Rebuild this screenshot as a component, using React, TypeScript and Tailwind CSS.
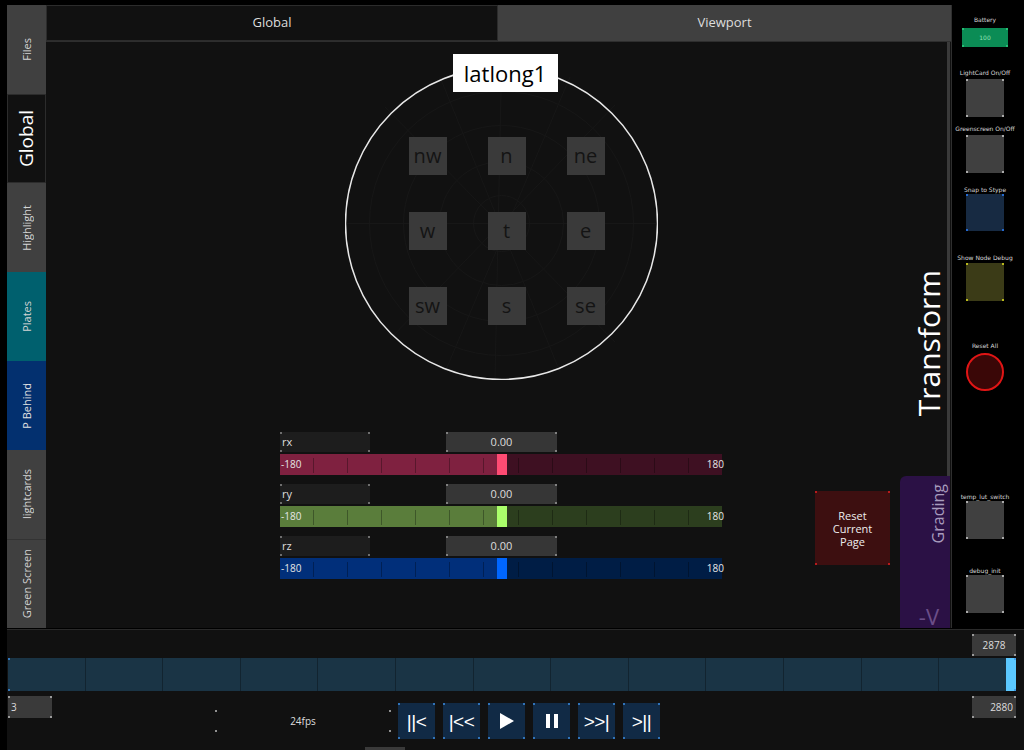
import React from 'react';

type DotsProps = { color?: string };

const Dots: React.FC<DotsProps> = ({ color = 'bg-[#d0d0d0]' }) => (
    <>
        <span className={`absolute left-0 top-0 w-[2px] h-[2px] rounded-full ${color}`} />
        <span className={`absolute right-0 top-0 w-[2px] h-[2px] rounded-full ${color}`} />
        <span className={`absolute left-0 bottom-0 w-[2px] h-[2px] rounded-full ${color}`} />
        <span className={`absolute right-0 bottom-0 w-[2px] h-[2px] rounded-full ${color}`} />
    </>
);

const vertical = '[writing-mode:vertical-rl] rotate-180';

const sideTabs = [
    { label: 'Files', cls: 'bg-[#404040] text-[11px] text-[#d4d4d4]' },
    { label: 'Global', cls: 'bg-[#111111] border border-[#2c2c2c] text-[19px] text-white' },
    { label: 'Highlight', cls: 'bg-[#404040] text-[11px] text-[#d4d4d4]' },
    { label: 'Plates', cls: 'bg-[#00606e] text-[11px] text-[#d4d4d4]' },
    { label: 'P Behind', cls: 'bg-[#03306f] text-[11px] text-[#e0e0e0]' },
    { label: 'lightcards', cls: 'bg-[#404040] text-[11px] text-[#d4d4d4]' },
    { label: 'Green Screen', cls: 'bg-[#404040] border-t border-[#333] text-[11px] text-[#d4d4d4]' },
];

const Sidebar: React.FC = () => (
    <div className="w-[39px] h-[623px] mt-[5px] flex flex-col">
        {sideTabs.map((t) => (
            <div key={t.label} className={`h-[89px] flex items-center justify-center ${t.cls}`}>
                <span className={`${vertical} whitespace-nowrap leading-none`}>{t.label}</span>
            </div>
        ))}
    </div>
);

const cells = ['nw', 'n', 'ne', 'w', 't', 'e', 'sw', 's', 'se'];

const Globe: React.FC = () => (
    <div className="relative w-[313px] h-[313px] mt-[25px]">
        <svg className="absolute inset-0" width="313" height="313" viewBox="0 0 313 313">
            <g fill="none" stroke="#171717" strokeWidth="1">
                <circle cx="156.5" cy="156.5" r="28" />
                <circle cx="156.5" cy="156.5" r="62" />
                <circle cx="156.5" cy="156.5" r="98" />
                <circle cx="156.5" cy="156.5" r="132" />
                <line x1="0" y1="156.5" x2="313" y2="156.5" />
                <line x1="156.5" y1="0" x2="150" y2="313" />
                <line x1="40" y1="40" x2="270" y2="275" />
                <line x1="270" y1="38" x2="45" y2="272" />
                <line x1="95" y1="10" x2="215" y2="305" />
                <line x1="225" y1="10" x2="100" y2="305" />
            </g>
            <circle cx="156.5" cy="156.5" r="156" fill="none" stroke="#e8e8e8" strokeWidth="1.5" />
        </svg>
        <div className="absolute left-[108px] -top-[13px] w-[105px] h-[38px] bg-white flex items-center justify-center text-[22px] text-black">
            latlong1
        </div>
        <div className="relative grid grid-cols-[38px_38px_38px] gap-x-[41px] gap-y-[37px] pl-[64px] pt-[70px]">
            {cells.map((c) => (
                <div key={c} className="w-[38px] h-[38px] bg-[#3a3a3a] flex items-center justify-center text-[20px] text-[#141414] leading-none">
                    {c}
                </div>
            ))}
        </div>
    </div>
);

type SliderProps = { name: string; fill: string; handle: string; rest: string };

const Ticks: React.FC<{ count: number; cls: string }> = ({ count, cls }) => (
    <div className={`absolute inset-x-0 flex ${cls}`}>
        {Array.from({ length: count }).map((_, i) => (
            <div key={i} className={`flex-1 ${i < count - 1 ? 'border-r border-black/30' : ''}`} />
        ))}
    </div>
);

const SliderRow: React.FC<SliderProps> = ({ name, fill, handle, rest }) => (
    <div className="flex flex-col gap-[2px]">
        <div className="flex h-[20px]">
            <div className="relative w-[90px] bg-[#1d1d1d] pl-[2px] text-[11px] leading-[20px] text-[#dddddd]">
                {name}
                <Dots color="bg-[#8a8a8a]" />
            </div>
            <div className="relative ml-[76px] w-[111px] bg-[#363636] text-center text-[11px] leading-[20px] text-[#dddddd]">
                0.00
                <Dots color="bg-[#9a9a9a]" />
            </div>
        </div>
        <div className="relative h-[21px] flex">
            <div className={`w-[217px] ${fill}`} />
            <div className={`w-[10px] ${handle}`} />
            <div className={`flex-1 ${rest}`} />
            <Ticks count={13} cls="top-[4px] bottom-[2px]" />
            <span className="absolute left-[1px] top-0 text-[10px] leading-[21px] text-[#e6e6e6]">-180</span>
            <span className="absolute -right-[2px] top-0 text-[10px] leading-[21px] text-[#e6e6e6]">180</span>
        </div>
    </div>
);

const Canvas: React.FC = () => (
    <div className="relative h-[586px] bg-[#111111] flex">
        <div className="ml-[234px] w-[442px] flex flex-col items-center">
            <Globe />
            <div className="w-full mt-[52px] flex flex-col gap-[9px]">
                <SliderRow name="rx" fill="bg-[#7f2140]" handle="bg-[#ff4b73]" rest="bg-[#3e1022]" />
                <SliderRow name="ry" fill="bg-[#5a7d3b]" handle="bg-[#aaff6a]" rest="bg-[#2c3e1e]" />
                <SliderRow name="rz" fill="bg-[#012f7a]" handle="bg-[#0066ff]" rest="bg-[#001d45]" />
            </div>
        </div>
        <div className="ml-[93px] w-[75px]">
            <div className="relative mt-[449px] h-[74px] bg-[#3d0f10] flex items-center justify-center text-center text-[11px] leading-[13px] text-[#eeeeee]">
                Reset
                <br />
                Current
                <br />
                Page
                <Dots color="bg-[#e02020]" />
            </div>
        </div>
        <div className="ml-[10px] w-[50px] flex flex-col">
            <div className="mt-[228px] pl-[12px]">
                <span className={`${vertical} block text-[30px] leading-[34px] text-white whitespace-nowrap`}>Transform</span>
            </div>
            <div className="mt-auto h-[152px] bg-[#2b1145] rounded-tl-[6px] flex flex-col items-end pr-[3px]">
                <span className={`${vertical} mt-[8px] text-[16px] leading-[18px] text-[#a89cbd]`}>Grading</span>
                <span className="mt-auto mr-[8px] mb-[1px] text-[22px] leading-[22px] text-[#6b4e88]">-V</span>
            </div>
        </div>
        <div className="absolute right-[1px] top-0 h-[434px] w-[3px] bg-[#3a3a3a]" />
    </div>
);

const Main: React.FC = () => (
    <div className="w-[906px] h-[623px] mt-[5px] flex flex-col border-r border-[#2f2f2f]">
        <div className="h-[36px] flex text-[13px] text-[#dddddd]">
            <div className="w-[452px] bg-[#111111] border border-[#2c2c2c] flex items-center justify-center">Global</div>
            <div className="flex-1 bg-[#404040] flex items-center justify-center">Viewport</div>
        </div>
        <div className="h-px bg-[#2e2e2e]" />
        <Canvas />
    </div>
);

const tiny = "text-[6px] leading-[8px] text-[#d8d8d8] text-center whitespace-nowrap font-['DejaVu_Sans',sans-serif]";

const RightCol: React.FC = () => (
    <div className="flex-1 pr-[6px] flex flex-col items-center">
        <div className={`mt-[16px] ${tiny}`}>Battery</div>
        <div className="relative mt-[4px] w-[46px] h-[19px] bg-[#0b8c55] flex items-center justify-center text-[6px] text-[#8fe0b4] font-['DejaVu_Sans',sans-serif]">
            100
            <Dots color="bg-[#2fd080]" />
        </div>
        <div className={`mt-[22px] ${tiny}`}>LightCard On/Off</div>
        <div className="relative mt-[2px] w-[38px] h-[38px] bg-[#404040]">
            <Dots />
        </div>
        <div className={`mt-[8px] ${tiny}`}>Greenscreen On/Off</div>
        <div className="relative mt-[2px] w-[38px] h-[38px] bg-[#404040]">
            <Dots />
        </div>
        <div className={`mt-[13px] ${tiny}`}>Snap to Stype</div>
        <div className="relative w-[38px] h-[37px] bg-[#172a42]">
            <Dots color="bg-[#2b7fff]" />
        </div>
        <div className={`mt-[23px] ${tiny}`}>Show Node Debug</div>
        <div className="relative mt-[1px] w-[38px] h-[38px] bg-[#3b3b17]">
            <Dots color="bg-[#e6e620]" />
        </div>
        <div className={`mt-[41px] ${tiny}`}>Reset All</div>
        <div className="mt-[3px] w-[38px] h-[38px] rounded-full border-2 border-[#e01515] bg-[#3a0707]" />
        <div className={`mt-[102px] ${tiny}`}>temp_lut_switch</div>
        <div className="relative w-[38px] h-[38px] bg-[#404040]">
            <Dots />
        </div>
        <div className={`mt-[28px] ${tiny}`}>debug_init</div>
        <div className="relative w-[38px] h-[38px] bg-[#404040]">
            <Dots />
        </div>
    </div>
);

const NumBox: React.FC<{ value: string; align: string }> = ({ value, align }) => (
    <div className={`relative w-[44px] h-[22px] bg-[#3a3a3a] px-[3px] text-[10px] leading-[22px] text-[#dddddd] ${align}`}>
        {value}
        <Dots color="bg-[#bdbdbd]" />
    </div>
);

const transport = ['||<', '|<<', 'play', 'pause', '>>|', '>||'];

const TransportButton: React.FC<{ kind: string }> = ({ kind }) => (
    <div className="relative w-[37px] h-[36px] bg-[#112a45] flex items-center justify-center text-white text-[19px] leading-none font-['Liberation_Sans',sans-serif]">
        {kind === 'play' ? (
            <svg width="16" height="18" viewBox="0 0 16 18">
                <path d="M1 1 L15 9 L1 17 Z" fill="#ffffff" />
            </svg>
        ) : kind === 'pause' ? (
            <svg width="14" height="16" viewBox="0 0 14 16">
                <rect x="1" y="1" width="4" height="14" fill="#ffffff" />
                <rect x="9" y="1" width="4" height="14" fill="#ffffff" />
            </svg>
        ) : (
            <span className="tracking-[-0.5px]">{kind}</span>
        )}
        <Dots color="bg-[#3b8de0]" />
    </div>
);

const Bottom: React.FC = () => (
    <div className="relative ml-[7px] h-[121px] bg-[#111111] border-t border-[#2a2a2a] flex flex-col">
        <div className="h-[28px] flex justify-end items-start pt-[4px] pr-[8px]">
            <NumBox value="2878" align="text-center" />
        </div>
        <div className="relative ml-px w-[1008px] h-[33px] bg-[#1a3445] flex">
            <Ticks count={13} cls="inset-y-0" />
            <div className="ml-auto w-[10px] h-full bg-[#5bc8ff] relative" />
            <Dots color="bg-[#3b8de0]" />
        </div>
        <div className="mt-[5px] flex items-start">
            <div className="ml-px">
                <NumBox value="3" align="text-left" />
            </div>
            <div className="relative ml-[163px] mt-[14px] w-[176px] h-[22px] flex items-center justify-center text-[10px] text-[#dddddd]">
                24fps
                <Dots color="bg-[#bdbdbd]" />
            </div>
            <div className="ml-[7px] mt-[7px] flex gap-[8px]">
                {transport.map((k) => (
                    <TransportButton key={k} kind={k} />
                ))}
            </div>
            <div className="ml-auto mr-[8px]">
                <NumBox value="2880" align="text-right" />
            </div>
        </div>
        <div className="absolute bottom-0 left-[358px] w-[40px] h-[3px] bg-[#3a3a3a]" />
    </div>
);

export default function App() {
    return (
        <div className="w-[1024px] h-[750px] bg-black flex flex-col overflow-hidden font-['Open_Sans','Noto_Sans',sans-serif]">
            <div className="h-[629px] flex">
                <div className="w-[7px]" />
                <Sidebar />
                <Main />
                <RightCol />
            </div>
            <Bottom />
        </div>
    );
}
